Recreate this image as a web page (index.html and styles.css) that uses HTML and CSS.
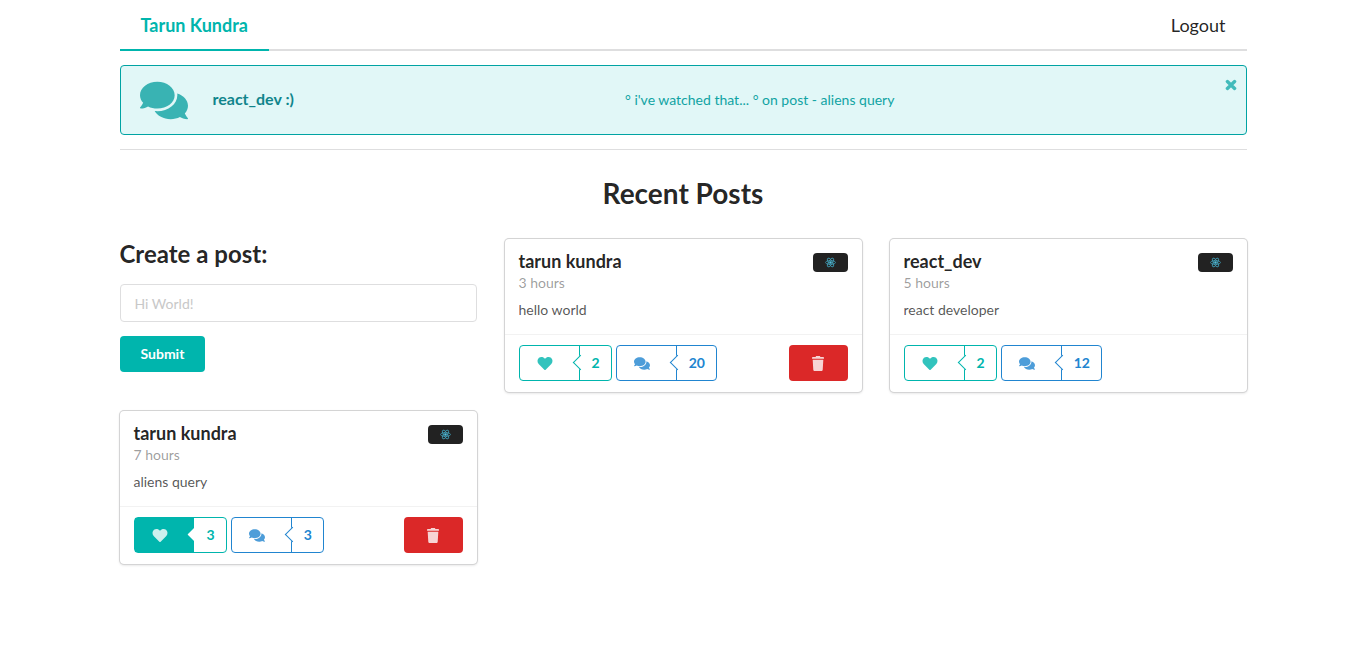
FILE: index.html
```html
<!DOCTYPE html>
<html lang="en">
<head>
<meta charset="utf-8">
<meta name="viewport" content="width=device-width, initial-scale=1">
<title>Recent Posts</title>
<link rel="stylesheet" href="styles.css">
</head>
<body>
<svg class="sprite" aria-hidden="true">
  <symbol id="heart" viewBox="0 0 512 512"><path d="M462.3 62.6C407.5 15.9 326 24.3 275.7 76.2L256 96.5l-19.7-20.3C186.1 24.3 104.5 15.9 49.7 62.6c-62.8 53.6-66.1 149.8-9.9 207.9l193.5 199.8c12.5 12.9 32.8 12.9 45.3 0l193.5-199.8c56.3-58.1 53-154.3-9.8-207.9z"/></symbol>
  <symbol id="comments" viewBox="0 0 576 512"><path d="M416 192c0-88.4-93.1-160-208-160S0 103.6 0 192c0 34.3 14.1 65.9 38 92-13.4 30.2-35.5 54.2-35.8 54.5-2.2 2.3-2.8 5.7-1.5 8.7S4.8 352 8 352c36.6 0 66.9-12.3 88.7-25 32.2 15.7 70.3 25 111.3 25 114.9 0 208-71.6 208-160zm122 220c23.9-26 38-57.7 38-92 0-66.9-53.5-124.2-129.3-148.1.9 6.6 1.3 13.3 1.3 20.1 0 105.9-107.7 192-240 192-10.8 0-21.3-.8-31.7-1.9C207.8 439.6 281.8 480 368 480c41 0 79.1-9.2 111.3-25 21.8 12.7 52.1 25 88.7 25 3.2 0 6.1-1.9 7.3-4.8 1.3-2.9.7-6.3-1.5-8.7-.3-.3-22.4-24.2-35.8-54.5z"/></symbol>
  <symbol id="trash" viewBox="0 0 448 512"><path d="M20 84V56c0-13.3 10.7-24 24-24h97l9.4-18.7c4-8.2 12.3-13.3 21.4-13.3h104.3c9.1 0 17.4 5.1 21.5 13.3L307 32h97c13.3 0 24 10.7 24 24v28c0 6.6-5.4 12-12 12H32C25.4 96 20 90.6 20 84zM405.2 140.7L384.8 467c-1.6 25.3-22.6 45-47.9 45H111.1c-25.3 0-46.3-19.7-47.9-45L42.8 140.7c-.4-6.9 5.1-12.7 12-12.7h338.5c6.8 0 12.3 5.8 11.9 12.7z"/></symbol>
  <symbol id="close" viewBox="0 0 12 12"><path d="M2.4 2.6l7.2 6.8M9.6 2.6l-7.2 6.8" fill="none" stroke="currentColor" stroke-width="3.4" stroke-linecap="round"/></symbol>
  <symbol id="atom" viewBox="0 0 24 24"><g fill="none" stroke="#3f9cb4" stroke-width="1.8"><ellipse cx="12" cy="12" rx="11" ry="4.2"/><ellipse cx="12" cy="12" rx="11" ry="4.2" transform="rotate(60 12 12)"/><ellipse cx="12" cy="12" rx="11" ry="4.2" transform="rotate(120 12 12)"/></g><circle cx="12" cy="12" r="2.6" fill="#53c1de"/></symbol>
</svg>

<div class="container">
  <nav class="menu">
    <a class="menu-item active" href="#">Tarun Kundra</a>
    <a class="menu-item" href="#">Logout</a>
  </nav>

  <section class="message">
    <svg class="message-icon"><use href="#comments"/></svg>
    <strong class="message-header">react_dev :)</strong>
    <p class="message-text">° i've watched that... ° on post - aliens query</p>
    <button class="message-close" type="button" aria-label="Close"><svg class="close-icon"><use href="#close"/></svg></button>
  </section>

  <hr class="divider">

  <h1 class="page-title">Recent Posts</h1>

  <main class="grid">
    <form class="post-form">
      <label class="form-title" for="post-body">Create a post:</label>
      <input class="field" id="post-body" type="text" placeholder="Hi World!">
      <button class="submit" type="button">Submit</button>
    </form>

    <article class="card">
      <div class="content">
        <div>
          <h2 class="name">tarun kundra</h2>
          <p class="meta">3 hours</p>
          <p class="description">hello world</p>
        </div>
        <div class="avatar"><svg class="atom"><use href="#atom"/></svg></div>
      </div>
      <div class="extra">
        <button class="counter teal" type="button" aria-label="Like, 2 likes"><span class="face"><svg class="icon"><use href="#heart"/></svg></span><span class="count">2</span></button>
        <a class="counter blue" href="#" aria-label="20 comments"><span class="face"><svg class="icon"><use href="#comments"/></svg></span><span class="count">20</span></a>
        <button class="delete" type="button" aria-label="Delete post"><svg class="icon"><use href="#trash"/></svg></button>
      </div>
    </article>

    <article class="card">
      <div class="content">
        <div>
          <h2 class="name">react_dev</h2>
          <p class="meta">5 hours</p>
          <p class="description">react developer</p>
        </div>
        <div class="avatar"><svg class="atom"><use href="#atom"/></svg></div>
      </div>
      <div class="extra">
        <button class="counter teal" type="button" aria-label="Like, 2 likes"><span class="face"><svg class="icon"><use href="#heart"/></svg></span><span class="count">2</span></button>
        <a class="counter blue" href="#" aria-label="12 comments"><span class="face"><svg class="icon"><use href="#comments"/></svg></span><span class="count">12</span></a>
      </div>
    </article>

    <article class="card">
      <div class="content">
        <div>
          <h2 class="name">tarun kundra</h2>
          <p class="meta">7 hours</p>
          <p class="description">aliens query</p>
        </div>
        <div class="avatar"><svg class="atom"><use href="#atom"/></svg></div>
      </div>
      <div class="extra">
        <button class="counter teal liked" type="button" aria-label="Unlike, 3 likes"><span class="face"><svg class="icon"><use href="#heart"/></svg></span><span class="count">3</span></button>
        <a class="counter blue" href="#" aria-label="3 comments"><span class="face"><svg class="icon"><use href="#comments"/></svg></span><span class="count">3</span></a>
        <button class="delete" type="button" aria-label="Delete post"><svg class="icon"><use href="#trash"/></svg></button>
      </div>
    </article>
  </main>
</div>
</body>
</html>
```
FILE: styles.css
```css
* {
  box-sizing: border-box;
}

body {
  margin: 0;
  background: #fff;
  color: rgba(0, 0, 0, 0.87);
  font-family: Lato, "Open Sans", sans-serif;
  font-size: 14px;
  line-height: 20px;
}

h1, h2, p {
  margin: 0;
}

button, input {
  font-family: inherit;
  font-size: 14px;
}

button {
  cursor: pointer;
}

svg {
  display: block;
  fill: currentColor;
}

.sprite {
  position: absolute;
  width: 0;
  height: 0;
}

.container {
  max-width: 1127px;
  margin: 0 auto;
  padding-bottom: 28px;
}

.menu {
  display: flex;
  justify-content: space-between;
  border-bottom: 2px solid #dededf;
}

.menu-item {
  margin-bottom: -2px;
  padding: 13px 21px 12px;
  border-bottom: 2px solid transparent;
  color: rgba(0, 0, 0, 0.87);
  font-size: 18px;
  line-height: 24px;
  text-decoration: none;
}

.menu-item.active {
  border-color: #00b5ad;
  color: #00b5ad;
  font-weight: 700;
}

.message {
  position: relative;
  display: flex;
  align-items: center;
  min-height: 70px;
  margin-top: 14px;
  padding: 0 20px 0 19px;
  border: 1px solid #00a3a3;
  border-radius: 4px;
  background: #e1f7f7;
  color: #10a3a3;
}

.message-icon {
  width: 48px;
  height: 43px;
  opacity: 0.8;
}

.message-header {
  padding: 0 0 2px 25px;
  color: #10858c;
  font-size: 16px;
}

.message-text {
  flex: 1;
  text-align: center;
}

.message-close {
  position: absolute;
  top: 13px;
  right: 9px;
  padding: 0;
  border: 0;
  background: none;
  color: #00a3a3;
}

.close-icon {
  width: 12px;
  height: 12px;
  opacity: 0.7;
}

.divider {
  height: 1px;
  margin: 14px 0 27px;
  border: 0;
  background: #dededf;
}

.page-title {
  font-size: 28px;
  line-height: 32px;
  text-align: center;
}

.grid {
  display: grid;
  grid-template-columns: repeat(3, 1fr);
  gap: 19px 28px;
  margin-top: 30px;
}

.post-form {
  display: flex;
  flex-direction: column;
  align-items: flex-start;
  gap: 14px;
}

.form-title {
  padding-bottom: 2px;
  font-size: 24px;
  font-weight: 700;
  line-height: 29px;
}

.field {
  width: 100%;
  height: 38px;
  padding: 0 14px;
  border: 1px solid #dededf;
  border-radius: 4px;
  outline: 0;
}

.field::placeholder {
  color: #c8c8c8;
}

.submit {
  height: 36px;
  padding: 0 21px 1px;
  border: 0;
  border-radius: 4px;
  background: #00b5ad;
  color: #fff;
  font-weight: 700;
}

.card {
  border-radius: 4px;
  box-shadow: 0 1px 3px 0 #d4d4d5, 0 0 0 1px #d4d4d5;
}

.content {
  display: flex;
  justify-content: space-between;
  align-items: flex-start;
  padding: 11px 14px 14px;
}

.name {
  font-size: 18px;
  line-height: 23px;
}

.meta {
  color: rgba(0, 0, 0, 0.4);
}

.description {
  margin-top: 7px;
  color: rgba(0, 0, 0, 0.68);
}

.avatar {
  display: flex;
  align-items: center;
  justify-content: center;
  width: 35px;
  height: 19px;
  margin-top: 3px;
  border-radius: 4px;
  background: #222;
}

.atom {
  width: 11px;
  height: 11px;
}

.extra {
  display: flex;
  gap: 4px;
  padding: 10px 14px 11px;
  border-top: 1px solid #f2f2f2;
}

.counter {
  display: flex;
  height: 36px;
  padding: 0;
  border: 1px solid;
  border-radius: 4px;
  background: #fff;
  font-weight: 700;
  text-decoration: none;
}

.teal {
  color: #00b5ad;
}

.blue {
  color: #2185d0;
}

.face {
  display: flex;
  align-items: center;
  width: 59px;
  height: 34px;
  padding-left: 17px;
}

.icon {
  width: 16px;
  height: 15px;
  opacity: 0.8;
}

.count {
  position: relative;
  display: flex;
  align-items: center;
  height: 34px;
  padding: 0 11px 1px 12px;
  border-left: 1px solid;
}

.count::before {
  content: "";
  position: absolute;
  top: 11px;
  left: -5px;
  width: 10px;
  height: 10px;
  border: solid;
  border-width: 0 0 1px 1px;
  background: #fff;
  transform: rotate(45deg);
}

.liked .face {
  background: #00b5ad;
  color: #fff;
}

.liked .count {
  border-left-color: #fff;
}

.liked .count::before {
  border-color: #fff;
}

.delete {
  display: flex;
  align-items: center;
  justify-content: center;
  width: 59px;
  height: 36px;
  margin-left: auto;
  border: 0;
  border-radius: 4px;
  background: #db2828;
  color: #fff;
}
```
